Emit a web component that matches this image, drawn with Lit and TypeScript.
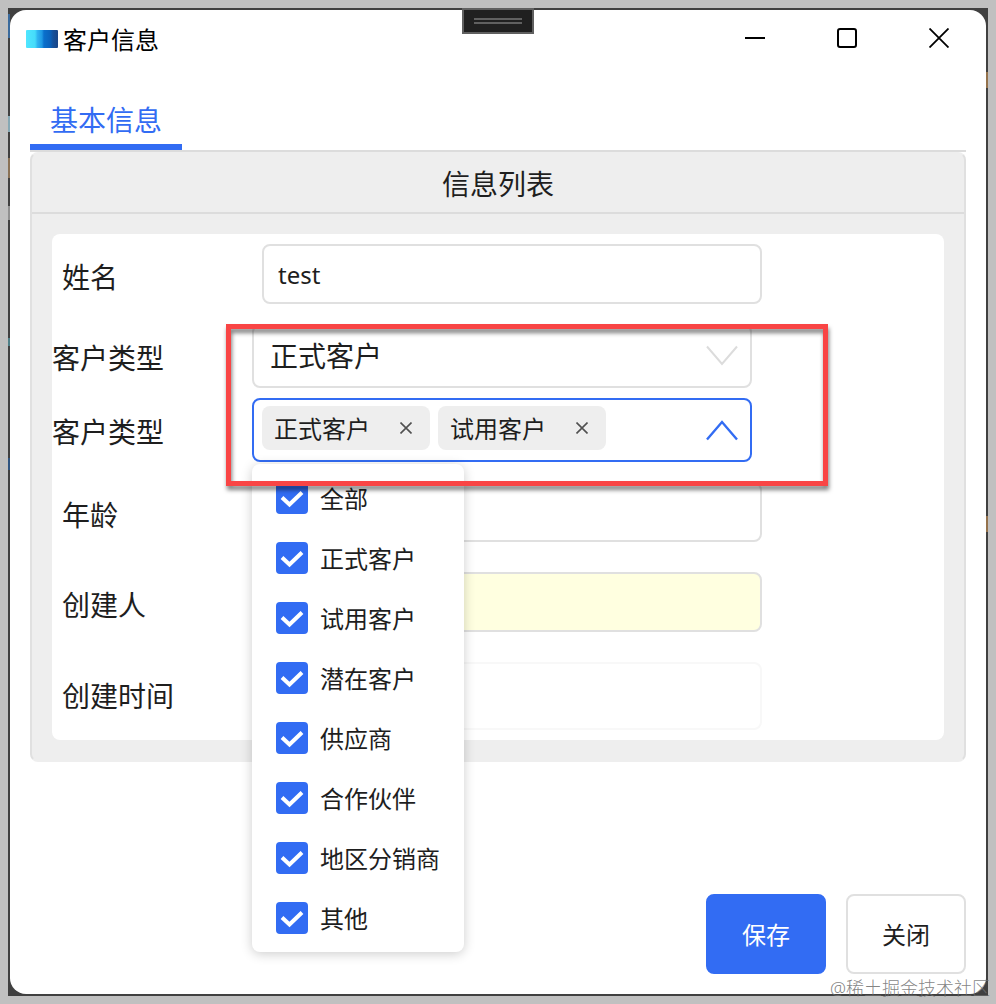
import { LitElement, html, css, svg } from "lit";
import { customElement, state } from "lit/decorators.js";

const OPTIONS = ["正式客户", "试用客户", "潜在客户", "供应商", "合作伙伴", "地区分销商", "其他"];

@customElement("app-root")
export class AppRoot extends LitElement {
  static styles = css`
    :host {
      display: block;
      font-family: "Noto Sans", "Noto Sans CJK SC", sans-serif;
      color: #1e1e1e;
    }
    * {
      box-sizing: border-box;
    }
    button,
    input,
    select {
      font: inherit;
      color: inherit;
      margin: 0;
    }
    button {
      padding: 0;
      border: 0;
      background: none;
    }
    .desktop {
      min-height: 100vh;
      padding: 8px;
      display: flex;
      background: #c0c0c0;
      position: relative;
      overflow: hidden;
    }
    .frame {
      flex: 1;
      display: flex;
      padding: 2px;
      background:
        linear-gradient(#3a6a9c, #3a6a9c) 0 6px / 2px 24px no-repeat,
        linear-gradient(#86a8b4, #86a8b4) 0 108px / 2px 16px no-repeat,
        linear-gradient(#8a7256, #8a7256) 0 150px / 2px 20px no-repeat,
        linear-gradient(#909090, #909090) 0 198px / 2px 14px no-repeat,
        linear-gradient(#4f8088, #4f8088) 0 330px / 2px 8px no-repeat,
        linear-gradient(#2f5480, #2f5480) 0 450px / 2px 12px no-repeat,
        linear-gradient(#94724c, #94724c) 100% 64px / 2px 16px no-repeat,
        linear-gradient(#94724c, #94724c) 100% 508px / 2px 16px no-repeat,
        #404040;
    }
    .window {
      flex: 1;
      display: flex;
      flex-direction: column;
      background: #fff;
      border-radius: 16px;
      box-shadow: 0 0 0 2px #404040 inset, 0 0 0 0 #404040;
      box-shadow: none;
      position: relative;
    }
    .grip {
      position: absolute;
      top: -2px;
      left: 50%;
      transform: translateX(-50%);
      width: 72px;
      height: 26px;
      border: 2px solid #606060;
      background: #202020;
      display: flex;
      flex-direction: column;
      align-items: center;
      justify-content: center;
      gap: 2px;
    }
    .grip-line {
      width: 48px;
      height: 2px;
      background: #606060;
    }
    .titlebar {
      display: flex;
      align-items: center;
      height: 56px;
      padding: 0 1px 0 16px;
    }
    .logo {
      width: 32px;
      height: 22px;
    }
    .title {
      flex: 1;
      margin: 0;
      padding: 4px 0 0 5px;
      font-size: 24px;
      line-height: 32px;
      font-weight: 400;
      color: #000;
    }
    .win-btn {
      width: 92px;
      height: 56px;
      display: grid;
      place-items: center;
    }
    .win-btn svg {
      display: block;
    }
    .body {
      flex: 1;
      display: flex;
      flex-direction: column;
      padding: 16px 20px 20px;
    }
    .tabs {
      display: flex;
      border-bottom: 2px solid #dcdcdc;
    }
    .tab {
      height: 68px;
      padding: 14px 20px 0;
      border-bottom: 6px solid #326cf3;
      font-size: 28px;
      line-height: 40px;
      color: #326cf3;
    }
    .card {
      border: 2px solid #e0e0e0;
      border-top-color: #eee;
      border-bottom-color: #eee;
      border-radius: 8px;
      background: #eee;
    }
    .card-title {
      margin: 0;
      height: 60px;
      border-bottom: 2px solid #dcdcdc;
      font-size: 28px;
      line-height: 60px;
      font-weight: 400;
      text-align: center;
    }
    .form {
      margin: 20px;
      background: #fff;
      border-radius: 8px;
      display: flex;
      flex-direction: column;
      gap: 10px;
      font-size: 28px;
      line-height: 40px;
    }
    .row {
      display: grid;
      grid-template-columns: 200px minmax(0, 500px);
      align-items: center;
    }
    .row.inset {
      padding: 10px;
    }
    .label {
      padding-top: 4px;
    }
    .row.inset .label {
      padding-top: 6px;
    }
    .row.inset .label.plain {
      padding-top: 0;
    }
    .text-input {
      width: 100%;
      height: 60px;
      padding: 0 14px;
      border: 2px solid #e0e0e0;
      border-radius: 8px;
      background: #fff;
      font-size: 24px;
      outline: none;
    }
    .text-input.readonly {
      background: #ffffe0;
    }
    .text-input.faint {
      height: 68px;
      border-color: #f8f8f8;
    }
    .combo {
      display: grid;
      align-items: center;
      position: relative;
      height: 64px;
    }
    .combo > .select,
    .combo > .chevron {
      grid-area: 1 / 1;
    }
    .select {
      appearance: none;
      width: 100%;
      height: 64px;
      padding: 0 16px;
      border: 2px solid #e0e0e0;
      border-radius: 8px;
      background: #fff;
      outline: none;
    }
    .chevron {
      justify-self: end;
      margin-right: 14px;
      display: block;
      pointer-events: none;
    }
    .multi {
      display: flex;
      align-items: center;
      gap: 8px;
      height: 64px;
      padding: 0 12px 0 8px;
      border: 2px solid #326cf3;
      border-radius: 8px;
      position: relative;
      font-size: 24px;
      line-height: 32px;
    }
    .chip {
      display: flex;
      align-items: center;
      height: 44px;
      margin-bottom: 4px;
      padding: 0 12px;
      gap: 24px;
      border-radius: 8px;
      background: #eee;
    }
    .chip-text,
    .option-text {
      padding-top: 2px;
    }
    .chip-remove {
      width: 24px;
      height: 24px;
      display: grid;
      place-items: center;
    }
    .toggle {
      margin-left: auto;
      width: 32px;
      height: 40px;
      display: grid;
      place-items: center;
    }
    .popup {
      position: absolute;
      z-index: 1;
      top: 64px;
      left: -2px;
      padding: 4px 24px;
      border-radius: 8px;
      background: #fff;
      box-shadow: 0 2px 12px rgba(0, 0, 0, 0.2);
    }
    .option {
      display: flex;
      align-items: center;
      gap: 12px;
      height: 60px;
      white-space: nowrap;
    }
    .check {
      appearance: none;
      width: 32px;
      height: 32px;
      border: 2px solid #dcdcdc;
      border-radius: 4px;
      background: #fff;
    }
    .check:checked {
      border: 0;
      background: #326cf3
        url("data:image/svg+xml,%3Csvg xmlns='http://www.w3.org/2000/svg' viewBox='0 0 32 32'%3E%3Cpath d='M6 15.500L13.500 22.500L26 10.500' fill='none' stroke='white' stroke-width='4'/%3E%3C/svg%3E");
    }
    .marker {
      position: absolute;
      z-index: 2;
      top: 0;
      left: -26px;
      right: -76px;
      height: 162px;
      border: 5px solid #f94545;
      filter: drop-shadow(1px 4px 2px rgba(0, 0, 0, 0.5));
      pointer-events: none;
    }
    .footer {
      margin-top: auto;
      display: flex;
      justify-content: flex-end;
      gap: 20px;
    }
    .btn {
      width: 120px;
      height: 80px;
      padding-top: 2px;
      border: 2px solid #e0e0e0;
      border-radius: 8px;
      background: #fff;
      font-size: 24px;
      line-height: 32px;
    }
    .btn.primary {
      border-color: #326cf3;
      background: #326cf3;
      color: #fff;
    }
    .watermark {
      position: absolute;
      right: 6px;
      bottom: 4px;
      font-size: 18px;
      line-height: 24px;
      font-weight: 300;
      color: rgba(110, 110, 110, 0.85);
      white-space: nowrap;
    }
  `;

  @state() private picked = new Set(OPTIONS);

  private toggle(name: string) {
    const next = new Set(this.picked);
    if (next.has(name)) next.delete(name);
    else next.add(name);
    this.picked = next;
  }

  private toggleAll() {
    this.picked = this.picked.size === OPTIONS.length ? new Set() : new Set(OPTIONS);
  }

  private chevron(up: boolean) {
    return html`<svg class=${up ? "arrow" : "chevron"} width="32" height="22" viewBox="0 0 32 22" fill="none">
      ${up
        ? svg`<path d="M1 20.500L16 3L31 20.500" stroke="#326cf3" stroke-width="2.400" />`
        : svg`<path d="M1 1.500L16 19L31 1.500" stroke="#dcdcdc" stroke-width="2" />`}
    </svg>`;
  }

  private chip(name: string) {
    return html`<span class="chip">
      <span class="chip-text">${name}</span>
      <button class="chip-remove" type="button" aria-label="移除${name}" @click=${() => this.toggle(name)}>
        <svg width="12" height="12" viewBox="0 0 12 12" stroke="#505050" stroke-width="1.6">
          <path d="M0.500 0.500L11.500 11.500M11.500 0.500L0.500 11.500" />
        </svg>
      </button>
    </span>`;
  }

  private option(name: string, checked: boolean, onChange: () => void) {
    return html`<label class="option">
      <input class="check" type="checkbox" .checked=${checked} @change=${onChange} />
      <span class="option-text">${name}</span>
    </label>`;
  }

  render() {
    return html`
      <div class="desktop">
        <div class="frame">
          <main class="window">
            <div class="grip"><span class="grip-line"></span><span class="grip-line"></span></div>
            <header class="titlebar">
              <svg class="logo" viewBox="0 0 32 22">
                <defs>
                  <linearGradient id="logo-fill">
                    <stop offset="0" stop-color="#50e6ff" />
                    <stop offset="0.28" stop-color="#45dcfa" />
                    <stop offset="0.36" stop-color="#2fb4f0" />
                    <stop offset="0.5" stop-color="#1e98e4" />
                    <stop offset="0.56" stop-color="#0a70cc" />
                    <stop offset="0.75" stop-color="#0a62bc" />
                    <stop offset="0.85" stop-color="#15509a" />
                    <stop offset="1" stop-color="#1a4486" />
                  </linearGradient>
                </defs>
                <rect y="3" width="32" height="18" rx="1" fill="url(#logo-fill)" />
              </svg>
              <h1 class="title">客户信息</h1>
              <button class="win-btn" aria-label="最小化">
                <svg width="20" height="20" viewBox="0 0 20 20"><path d="M0 10H20" stroke="#000" stroke-width="2" /></svg>
              </button>
              <button class="win-btn" aria-label="最大化">
                <svg width="20" height="20" viewBox="0 0 20 20">
                  <rect x="1" y="1" width="18" height="18" rx="2" fill="none" stroke="#000" stroke-width="2" />
                </svg>
              </button>
              <button class="win-btn" aria-label="关闭窗口">
                <svg width="20" height="20" viewBox="0 0 20 20">
                  <path d="M0.500 0.500L19.500 19.500M19.500 0.500L0.500 19.500" stroke="#000" stroke-width="1.800" />
                </svg>
              </button>
            </header>
            <div class="body">
              <div class="tabs" role="tablist">
                <button class="tab" role="tab" aria-selected="true">基本信息</button>
              </div>
              <section class="card">
                <h2 class="card-title">信息列表</h2>
                <form class="form" @submit=${(e: Event) => e.preventDefault()}>
                  <div class="row inset">
                    <label class="label" for="name">姓名</label>
                    <input class="text-input" id="name" value="test" />
                  </div>
                  <div class="row">
                    <label class="label" for="type">客户类型</label>
                    <div class="combo">
                      <select class="select" id="type">
                        ${OPTIONS.map((o) => html`<option>${o}</option>`)}
                      </select>
                      ${this.chevron(false)}
                      <div class="marker"></div>
                    </div>
                  </div>
                  <div class="row">
                    <span class="label" id="types">客户类型</span>
                    <div class="multi" role="group" aria-labelledby="types">
                      ${OPTIONS.filter((o) => this.picked.has(o)).slice(0, 2).map((o) => this.chip(o))}
                      <button class="toggle" type="button" aria-label="收起" aria-expanded="true">${this.chevron(true)}</button>
                      <div class="popup">
                        ${this.option("全部", this.picked.size === OPTIONS.length, () => this.toggleAll())}
                        ${OPTIONS.map((o) => this.option(o, this.picked.has(o), () => this.toggle(o)))}
                      </div>
                    </div>
                  </div>
                  <div class="row inset">
                    <label class="label" for="age">年龄</label>
                    <input class="text-input" id="age" />
                  </div>
                  <div class="row inset">
                    <label class="label" for="creator">创建人</label>
                    <input class="text-input readonly" id="creator" readonly />
                  </div>
                  <div class="row inset">
                    <label class="label plain" for="created">创建时间</label>
                    <input class="text-input faint" id="created" readonly />
                  </div>
                </form>
              </section>
              <footer class="footer">
                <button class="btn primary">保存</button>
                <button class="btn">关闭</button>
              </footer>
            </div>
          </main>
        </div>
        <span class="watermark">@稀土掘金技术社区</span>
      </div>
    `;
  }
}
